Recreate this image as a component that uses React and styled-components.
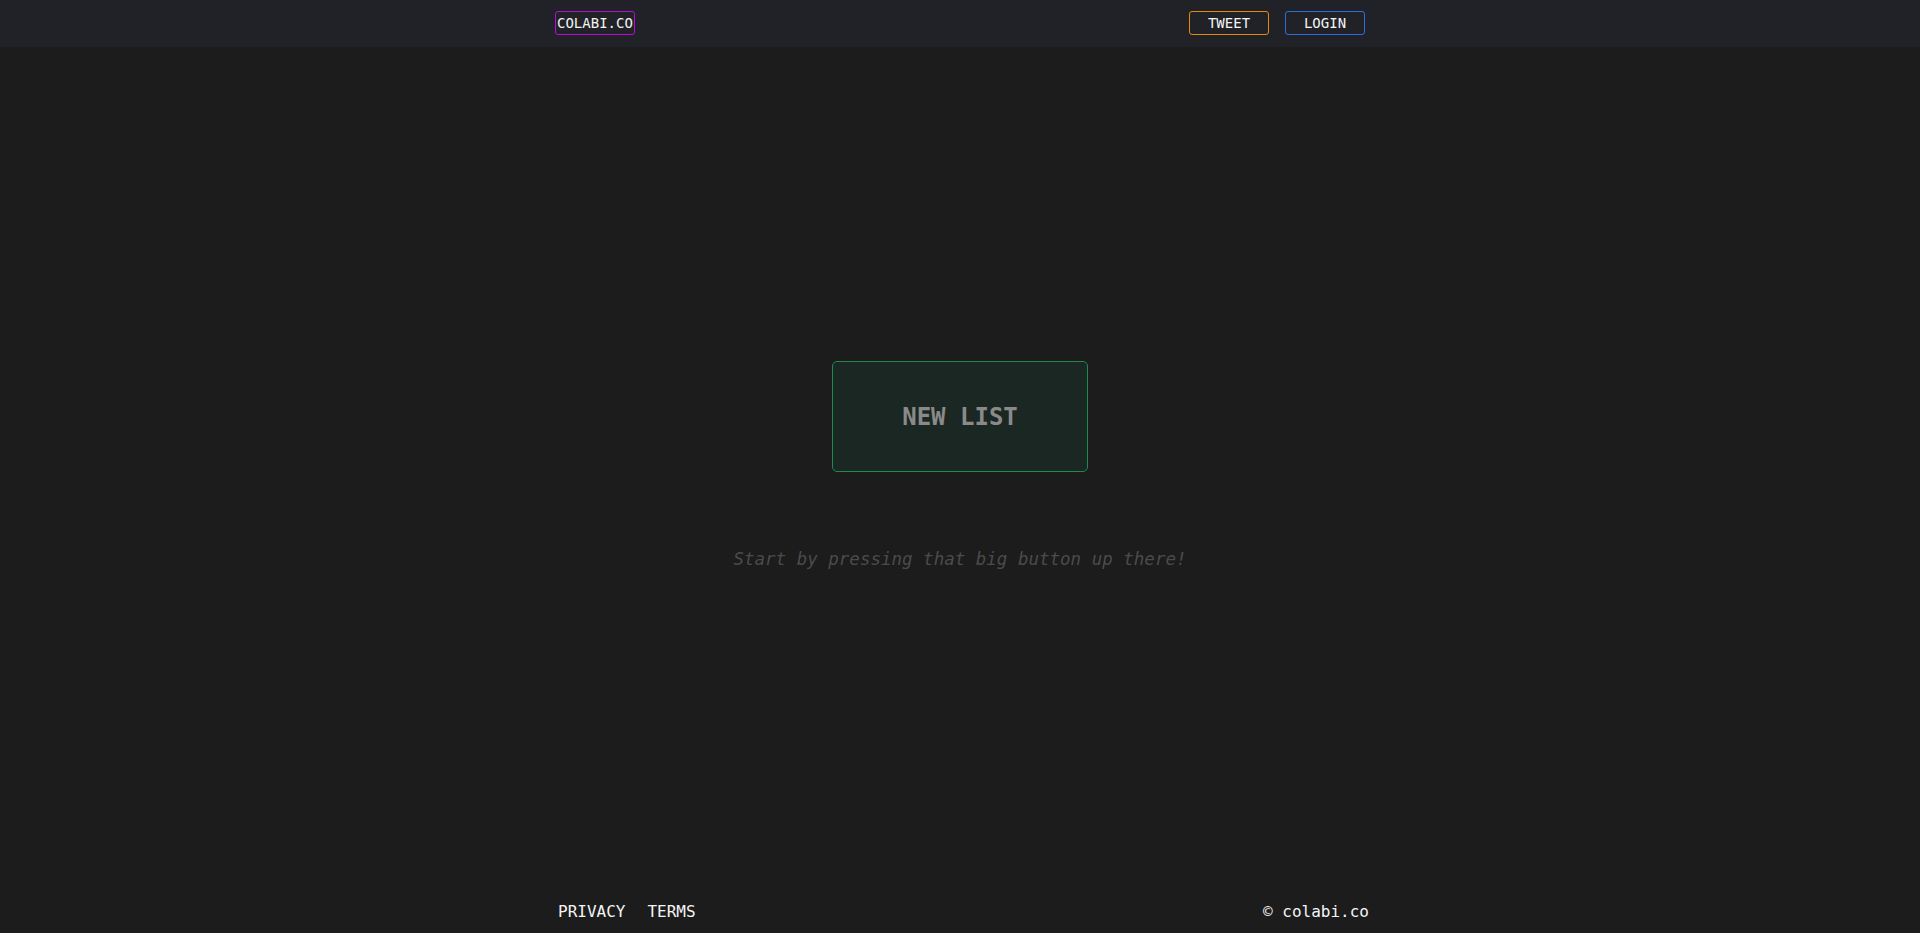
import React from 'react'
import styled, { createGlobalStyle } from 'styled-components'

const GlobalStyle = createGlobalStyle`
    html, body {
        margin: 0;
        padding: 0;
        background: #1c1c1c;
        font-family: "DejaVu Sans Mono", "Liberation Mono", monospace;
    }
`

export default function App() {
    return (
        <Page>
            <GlobalStyle />
            <Header>
                <HeaderInner>
                    <Logo>COLABI.CO</Logo>
                    <Actions>
                        <NavButton color="#e38a06">TWEET</NavButton>
                        <NavButton color="#2a6edc">LOGIN</NavButton>
                    </Actions>
                </HeaderInner>
            </Header>
            <Main>
                <BigButton>NEW LIST</BigButton>
                <Hint>Start by pressing that big button up there!</Hint>
            </Main>
            <Footer>
                <FooterInner>
                    <Links>
                        <FooterLink>PRIVACY</FooterLink>
                        <FooterLink>TERMS</FooterLink>
                    </Links>
                    <Copy>© colabi.co</Copy>
                </FooterInner>
            </Footer>
        </Page>
    )
}

const Page = styled.div`
    min-height: 100vh;
    display: flex;
    flex-direction: column;
    background: #1c1c1c;
`

const Header = styled.header`
    height: 47px;
    background: #212227;
    display: flex;
    align-items: flex-start;
`

const HeaderInner = styled.div`
    width: 810px;
    margin: 0 auto;
    padding-top: 11px;
    display: flex;
    justify-content: space-between;
    align-items: center;
`

const Logo = styled.div`
    border: 1px solid #b50cd8;
    border-radius: 3px;
    padding: 0 1px;
    height: 22px;
    line-height: 22px;
    font-size: 14px;
    color: #f2f2f2;
`

const Actions = styled.div`
    display: flex;
    gap: 16px;
`

const NavButton = styled.button`
    width: 80px;
    height: 24px;
    padding: 0;
    background: transparent;
    border: 1px solid ${p => p.color};
    border-radius: 3px;
    font-family: inherit;
    font-size: 14px;
    color: #f4f4f4;
    cursor: pointer;
`

const Main = styled.main`
    flex: 1;
    display: flex;
    flex-direction: column;
    align-items: center;
    padding-top: 314px;
`

const BigButton = styled.button`
    width: 256px;
    height: 111px;
    background: #1b2722;
    border: 1px solid #1e8a4e;
    border-radius: 5px;
    font-family: inherit;
    font-size: 24px;
    font-weight: bold;
    color: #8a8a8a;
    cursor: pointer;
`

const Hint = styled.p`
    margin: 77px 0 0;
    font-size: 17.5px;
    font-style: italic;
    color: #4b4b4b;
`

const Footer = styled.footer`
    padding-bottom: 12px;
`

const FooterInner = styled.div`
    width: 818px;
    margin: 0 auto;
    padding-left: 7px;
    box-sizing: border-box;
    display: flex;
    justify-content: space-between;
    font-size: 16px;
    color: #f4f4f4;
`

const Links = styled.div`
    display: flex;
    gap: 22px;
`

const FooterLink = styled.span`
    cursor: pointer;
`

const Copy = styled.span``
